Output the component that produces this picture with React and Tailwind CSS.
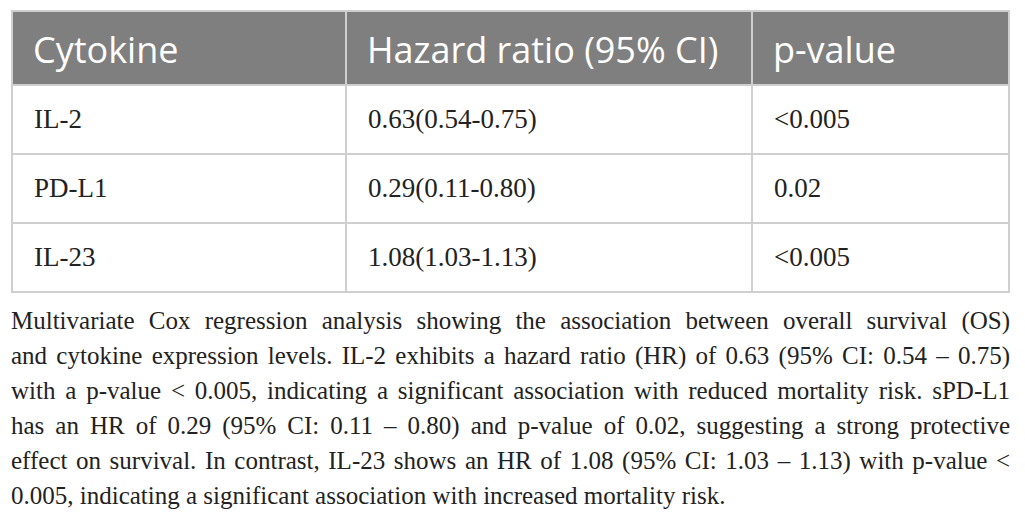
import React from 'react';

const rows = [
    { name: 'IL-2', hr: '0.63(0.54-0.75)', p: '<0.005' },
    { name: 'PD-L1', hr: '0.29(0.11-0.80)', p: '0.02' },
    { name: 'IL-23', hr: '1.08(1.03-1.13)', p: '<0.005' },
];

// caption lines kept as in the source layout
const captionLines = [
    'Multivariate Cox regression analysis showing the association between overall survival (OS)',
    'and cytokine expression levels. IL-2 exhibits a hazard ratio (HR) of 0.63 (95% CI: 0.54 – 0.75)',
    'with a p-value < 0.005, indicating a significant association with reduced mortality risk. sPD-L1',
    'has an HR of 0.29 (95% CI: 0.11 – 0.80) and p-value of 0.02, suggesting a strong protective',
    'effect on survival. In contrast, IL-23 shows an HR of 1.08 (95% CI: 1.03 – 1.13) with p-value <',
];

const App = () => {
    return (
        <div className="w-[1025px] h-[522px] bg-white pl-[11px] pt-[10px]">
            <div className="w-[999px]">
                <table className="w-full table-fixed border-collapse border-2 border-[#cfcfcf]">
                    <colgroup>
                        <col className="w-[334px]" />
                        <col className="w-[406px]" />
                        <col />
                    </colgroup>
                    <thead>
                        <tr className="h-[74px] bg-[#7f7f7f] text-white font-['Open_Sans',sans-serif] text-[36px]">
                            <th className="border-2 border-[#cfcfcf] pl-[20px] pt-[4px] text-left font-normal">Cytokine</th>
                            <th className="border-2 border-[#cfcfcf] pl-[20px] pt-[4px] text-left font-normal">Hazard ratio (95% CI)</th>
                            <th className="border-2 border-[#cfcfcf] pl-[20px] pt-[4px] text-left font-normal">p-value</th>
                        </tr>
                    </thead>
                    <tbody className="font-['Liberation_Serif',serif] text-[27px] text-[#222]">
                        {rows.map(row => (
                            <tr key={row.name} className="h-[69px]">
                                <td className="border-2 border-[#cfcfcf] pl-[21px]">{row.name}</td>
                                <td className="border-2 border-[#cfcfcf] pl-[21px]">{row.hr}</td>
                                <td className="border-2 border-[#cfcfcf] pl-[21px]">{row.p}</td>
                            </tr>
                        ))}
                    </tbody>
                </table>

                {/* Caption */}
                <div className="mt-[10px] font-['Liberation_Serif',serif] text-[25px] leading-[35px] text-[#222]">
                    {captionLines.map(line => (
                        <p key={line} className="text-justify [text-align-last:justify] whitespace-nowrap">{line}</p>
                    ))}
                    <p>0.005, indicating a significant association with increased mortality risk.</p>
                </div>
            </div>
        </div>
    );
};

export default App;
